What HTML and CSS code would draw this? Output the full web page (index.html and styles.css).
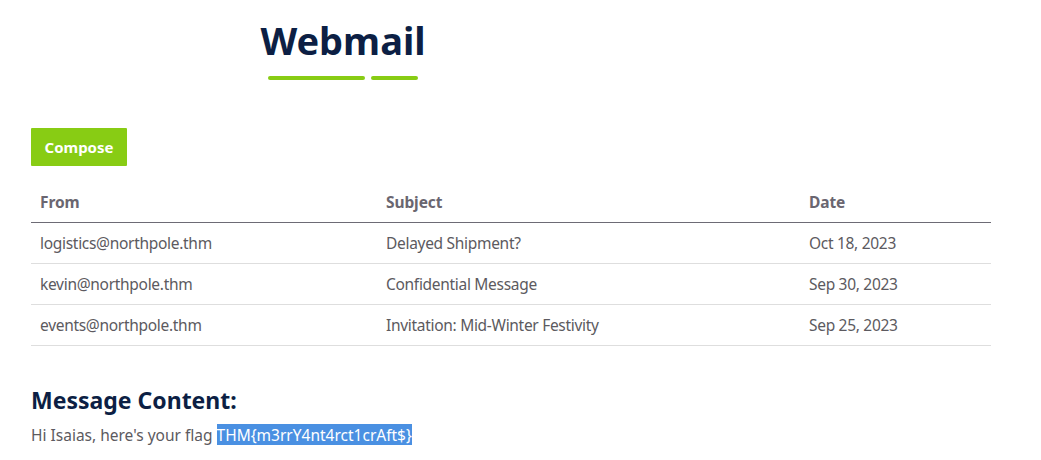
FILE: index.html
```html
<!DOCTYPE html>
<html>
<head>
<meta charset="utf-8">
<link rel="stylesheet" href="styles.css">
</head>
<body>
<div class="page">
  <header class="head">
    <h1 class="title">Webmail</h1>
    <div class="bars"><span class="bar bar-long"></span><span class="bar bar-short"></span></div>
  </header>
  <button class="compose">Compose</button>
  <table class="mails">
    <thead>
      <tr><th class="c-from">From</th><th class="c-subj">Subject</th><th class="c-date">Date</th></tr>
    </thead>
    <tbody>
      <tr><td>logistics@northpole.thm</td><td>Delayed Shipment?</td><td>Oct 18, 2023</td></tr>
      <tr><td>kevin@northpole.thm</td><td>Confidential Message</td><td>Sep 30, 2023</td></tr>
      <tr><td>events@northpole.thm</td><td>Invitation: Mid-Winter Festivity</td><td>Sep 25, 2023</td></tr>
    </tbody>
  </table>
  <section class="message">
    <h2 class="msg-title">Message Content:</h2>
    <p class="msg-body">Hi Isaias, here's your flag <span class="sel">THM{m3rrY4nt4rct1crAft$}</span></p>
  </section>
</div>
</body>
</html>
```
FILE: styles.css
```css
* { box-sizing: border-box; }
body {
  margin: 0;
  font-family: "Noto Sans", "Open Sans", sans-serif;
  color: #5c5a60;
  background: #fff;
}
.page {
  padding: 18px 50px 0 31px;
}
.head {
  width: 624px;
  display: flex;
  flex-direction: column;
  align-items: center;
}
.title {
  margin: 0;
  font-size: 38px;
  line-height: 44px;
  font-weight: 700;
  color: #0c1f44;
}
.bars {
  display: flex;
  gap: 6px;
  margin-top: 14px;
}
.bar {
  height: 4px;
  border-radius: 2px;
  background: #88cc14;
}
.bar-long { width: 97px; }
.bar-short { width: 47px; }
.compose {
  display: block;
  margin-top: 48px;
  width: 96px;
  height: 38px;
  border: 0;
  border-radius: 1px;
  background: #88cc14;
  color: #fff;
  font-family: inherit;
  font-weight: 700;
  font-size: 15px;
  padding: 0;
}
.mails {
  margin-top: 16px;
  width: 960px;
  border-collapse: collapse;
  font-size: 15.5px;
  letter-spacing: -0.3px;
}
.mails th {
  text-align: left;
  font-weight: 700;
  font-size: 15.5px;
  letter-spacing: -0.1px;
  color: #6a6670;
  padding: 0 9px;
  height: 40px;
  border-bottom: 1px solid #6d6b75;
}
.c-from { width: 346px; }
.c-subj { width: 423px; }
.mails td {
  padding: 0 9px;
  height: 41px;
  border-bottom: 1px solid #dedede;
  color: #5c5a60;
}
.message {
  padding-top: 39px;
}
.msg-title {
  margin: 0;
  font-size: 23px;
  line-height: 30px;
  font-weight: 700;
  color: #0c1f44;
}
.msg-body {
  margin: 10px 0 0;
  font-size: 15.5px;
  line-height: 20px;
  color: #5c5a60;
}
.sel {
  background: #4a90e2;
  color: #fff;
}
```
